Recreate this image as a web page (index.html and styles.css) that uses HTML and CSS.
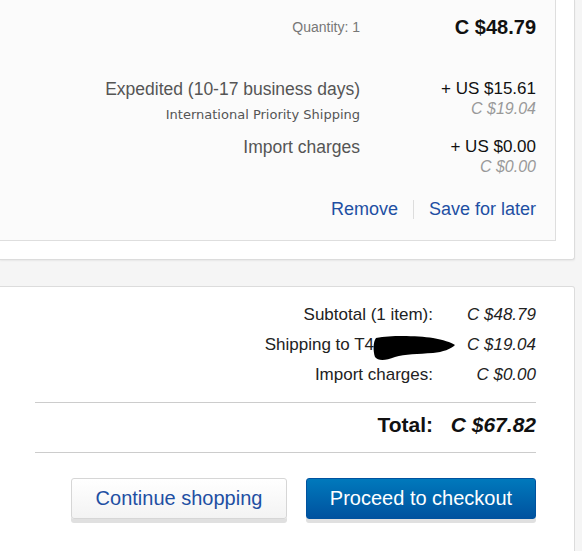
FILE: index.html
```html
<!DOCTYPE html>
<html>
<head>
<meta charset="utf-8">
<link rel="stylesheet" href="styles.css">
</head>
<body>
<div class="page">
  <section class="cart-panel">
    <div class="item-card">
      <div class="line line-qty">
        <div class="label qty">Quantity: 1</div>
        <div class="value price">C $48.79</div>
      </div>
      <div class="line line-ship">
        <div class="label">
          <div class="main-label">Expedited (10-17 business days)</div>
          <div class="sub-label">International Priority Shipping</div>
        </div>
        <div class="value">
          <div class="main-value">+ US $15.61</div>
          <div class="conv">C $19.04</div>
        </div>
      </div>
      <div class="line line-import">
        <div class="label">
          <div class="main-label">Import charges</div>
        </div>
        <div class="value">
          <div class="main-value">+ US $0.00</div>
          <div class="conv">C $0.00</div>
        </div>
      </div>
      <div class="actions">
        <a class="link" href="#">Remove</a>
        <span class="sep"></span>
        <a class="link" href="#">Save for later</a>
      </div>
    </div>
  </section>

  <section class="summary-card">
    <div class="sum-grid">
      <div class="sum-label">Subtotal (1 item):</div>
      <div class="sum-value">C $48.79</div>
      <div class="sum-label">Shipping to T4<span class="redacted"><svg class="scribble" width="84" height="26" viewBox="0 0 84 26"><path d="M3,3 C20,0 45,1 60,3 C70,5 78,7 82,10 C78,14 70,17 60,18 C45,19 32,19 22,22 C12,26 5,26 2,22 C0,16 0,7 3,3 Z" fill="#000"/></svg></span></div>
      <div class="sum-value">C $19.04</div>
      <div class="sum-label">Import charges:</div>
      <div class="sum-value">C $0.00</div>
    </div>
    <div class="rule rule-top"></div>
    <div class="sum-grid total-row">
      <div class="sum-label total-label">Total:</div>
      <div class="sum-value total-value">C $67.82</div>
    </div>
    <div class="rule rule-bottom"></div>
    <div class="buttons">
      <button class="btn btn-secondary">Continue shopping</button>
      <button class="btn btn-primary">Proceed to checkout</button>
    </div>
  </section>
</div>
</body>
</html>
```

FILE: styles.css
```css
html, body {
  margin: 0;
  padding: 0;
}
body {
  background: #f5f5f5;
  font-family: "Liberation Sans", Arial, sans-serif;
  color: #333;
  overflow: hidden;
}
.page {
  width: 575px;
}
.cart-panel {
  box-sizing: border-box;
  width: 575px;
  background: #fff;
  border-right: 1px solid #dcdcdc;
  border-bottom: 1px solid #dcdcdc;
  border-bottom-right-radius: 3px;
  box-shadow: 0 1px 2px rgba(0,0,0,0.06);
  padding: 0 18px 18px 0;
}
.item-card {
  background: #fbfbfb;
  border-right: 1px solid #dedede;
  border-bottom: 1px solid #dedede;
  padding: 15px 19px 20px 0;
}
.line {
  display: grid;
  grid-template-columns: 1fr 160px;
  column-gap: 16px;
  align-items: start;
}
.label {
  text-align: right;
}
.value {
  text-align: right;
}
.qty {
  font-size: 14px;
  line-height: 24px;
  color: #777;
}
.price {
  font-size: 20px;
  font-weight: bold;
  line-height: 24px;
  color: #111;
}
.line-ship {
  margin-top: 40px;
}
.line-import {
  margin-top: 12px;
}
.main-label {
  font-size: 17.5px;
  line-height: 20px;
  color: #555;
}
.sub-label {
  font-family: "DejaVu Sans", Verdana, sans-serif;
  font-size: 13px;
  line-height: 20px;
  margin-top: 6px;
  color: #555;
}
.main-value {
  font-size: 17px;
  line-height: 20px;
  color: #111;
}
.conv {
  font-size: 16px;
  font-style: italic;
  line-height: 20px;
  color: #999;
}
.actions {
  margin-top: 21px;
  display: flex;
  justify-content: flex-end;
  align-items: center;
  gap: 15px;
  height: 22px;
}
.link {
  font-size: 18px;
  line-height: 22px;
  color: #1e4fa3;
  text-decoration: none;
}
.sep {
  width: 1px;
  height: 19px;
  background: #dddddd;
}

.summary-card {
  margin-top: 26px;
  background: #fff;
  border: 1px solid #dcdcdc;
  border-left: none;
  border-radius: 0 3px 3px 0;
  padding: 13px 38px 40px 35px;
}
.sum-grid {
  display: grid;
  grid-template-columns: 1fr 87px;
  column-gap: 16px;
}
.sum-label {
  text-align: right;
  font-size: 17px;
  line-height: 30px;
  color: #222;
}
.sum-value {
  text-align: right;
  font-size: 17px;
  font-style: italic;
  line-height: 30px;
  color: #222;
}
.redacted {
  position: relative;
  display: inline-block;
  width: 59px;
  height: 20px;
  vertical-align: middle;
}
.scribble {
  position: absolute;
  left: -1px;
  top: -1px;
}
.rule {
  border-top: 1px solid #cccccc;
}
.rule-top {
  margin-top: 12px;
}
.total-row {
  margin-top: 7px;
}
.total-label {
  font-size: 21px;
  font-weight: bold;
  color: #111;
}
.total-value {
  font-size: 21px;
  font-weight: bold;
  color: #111;
}
.rule-bottom {
  margin-top: 12px;
}
.buttons {
  margin-top: 25px;
  display: flex;
  justify-content: flex-end;
  gap: 19px;
}
.btn {
  box-sizing: border-box;
  height: 41px;
  font-family: "Liberation Sans", Arial, sans-serif;
  font-size: 20px;
  border-radius: 3px;
  padding: 0;
  cursor: pointer;
}
.btn-secondary {
  width: 216px;
  color: #1e4fa3;
  background: linear-gradient(#ffffff, #f3f3f3);
  border: 1px solid #d6d6d6;
  box-shadow: 0 4px 0 #e0e0e0;
}
.btn-primary {
  width: 230px;
  color: #fff;
  background: linear-gradient(#0079bc, #00529f);
  border: 1px solid #00529f;
  box-shadow: 0 4px 0 #e0e0e0;
}
```
